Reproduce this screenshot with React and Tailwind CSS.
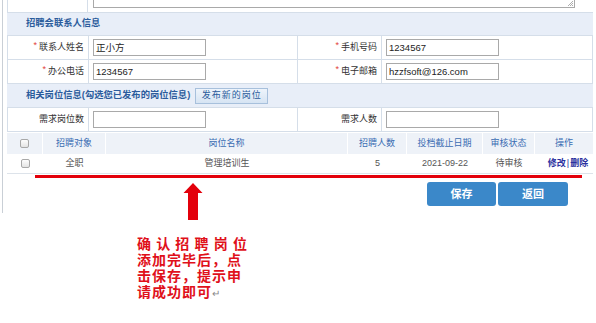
import React from 'react';

const font = { fontFamily: '"Liberation Sans", "Noto Sans CJK SC", sans-serif' };

function Label({ text }) {
  return (
    <div className="flex items-center justify-end pr-[4px] text-[9px] text-[#333] border-l border-[#d5dee9]">
      <span className="text-[#e2403a] text-[9px] mr-[2px] -mt-[3px]">*</span>
      {text}
    </div>
  );
}

function PlainLabel({ text }) {
  return (
    <div className="flex items-center justify-end pr-[4px] text-[9px] text-[#333] border-l border-[#d5dee9]">
      {text}
    </div>
  );
}

function Field({ value }) {
  return (
    <div className="flex items-center pl-[4px] border-l border-[#d5dee9]">
      <div className="w-[113px] h-[17px] border border-[#a9a9a9] px-[2px] flex items-center text-[9.5px] leading-none text-[#222] bg-white">
        {value}
      </div>
    </div>
  );
}

function Checkbox() {
  return (
    <div className="w-[9px] h-[9px] rounded-[2px] border border-[#a8a8a8] bg-gradient-to-b from-[#fdfdfd] to-[#e4e4e4]" />
  );
}

const cols = 'grid grid-cols-[81px_209px_84px_212px]';
const tcols = 'grid grid-cols-[36px_63px_242px_59px_76px_52px_58px]';

export default function App() {
  return (
    <div className="relative w-[596px] h-[323px] bg-white overflow-hidden" style={font}>
      <div className="ml-[2px] h-[213px] border-l border-[#c9cfd6] pl-[4px] w-[591px]">
        {/* textarea row */}
        <div className={`${cols} h-[13px] border-b border-[#d5dee9]`}>
          <div className="border-l border-r border-[#d5dee9]" />
          <div className="col-span-3 pl-[5px]">
            <div className="relative w-[482px] h-[8px] border-x border-b border-[#a9a9a9]">
              <svg className="absolute right-[1px] bottom-[1px]" width="6" height="6" viewBox="0 0 6 6">
                <path d="M1 6 L6 1 M3 6 L6 3 M5 6 L6 5" stroke="#999" strokeWidth="0.8" />
              </svg>
            </div>
          </div>
        </div>

        <div className="h-[23px] bg-[#e8eef8] border-b border-[#d5dee9] flex items-center pl-[19px] text-[9.3px] font-bold text-[#2b5c9c]">
          招聘会联系人信息
        </div>

        <div className={`${cols} h-[24px] border-b border-[#d5dee9] border-r`}>
          <Label text="联系人姓名" />
          <Field value="正小方" />
          <Label text="手机号码" />
          <Field value="1234567" />
        </div>
        <div className={`${cols} h-[24px] border-b border-[#d5dee9] border-r`}>
          <Label text="办公电话" />
          <Field value="1234567" />
          <Label text="电子邮箱" />
          <Field value="hzzfsoft@126.com" />
        </div>

        <div className="h-[24px] bg-[#e8eef8] border-b border-[#d5dee9] flex items-center pl-[19px] text-[9.3px] font-bold text-[#2b5c9c]">
          相关岗位信息(勾选您已发布的岗位信息)
          <div className="ml-[5px] w-[73px] h-[16px] border border-[#a7c0dc] bg-gradient-to-b from-[#eef4fb] to-[#d6e4f3] flex items-center justify-center font-normal text-[9px] tracking-[1px] text-[#2b5c9c]">
            发布新的岗位
          </div>
        </div>

        <div className={`${cols} h-[24px] border-b border-[#d5dee9] border-r`}>
          <PlainLabel text="需求岗位数" />
          <Field value="" />
          <PlainLabel text="需求人数" />
          <Field value="" />
        </div>

        {/* table */}
        <div className={`${tcols} mt-[1px] h-[21px] bg-[#eef2f8] text-[9px] text-[#3b6db3]`}>
          <div className="flex items-center justify-center border-r border-white"><Checkbox /></div>
          <div className="flex items-center justify-center border-r border-white">招聘对象</div>
          <div className="flex items-center justify-center border-r border-white">岗位名称</div>
          <div className="flex items-center justify-center border-r border-white">招聘人数</div>
          <div className="flex items-center justify-center border-r border-white">投档截止日期</div>
          <div className="flex items-center justify-center border-r border-white">审核状态</div>
          <div className="flex items-center justify-center">操作</div>
        </div>
        <div className={`${tcols} h-[20px] border-b border-[#dde3ea] text-[9px] text-[#555]`}>
          <div className="flex items-center justify-center"><Checkbox /></div>
          <div className="flex items-center justify-center">全职</div>
          <div className="flex items-center justify-center">管理培训生</div>
          <div className="flex items-center justify-center">5</div>
          <div className="flex items-center justify-center">2021-09-22</div>
          <div className="flex items-center justify-center">待审核</div>
          <div className="flex items-center justify-center pl-[8px] text-[#2a2f9e] font-bold">
            修改<span className="font-normal mx-[1px]">|</span>删除
          </div>
        </div>

        <div className="flex justify-end gap-[2px] mt-[8px] pr-[25px]">
          <div className="w-[69px] h-[24px] rounded-[3px] bg-[#3b88c9] flex items-center justify-center text-white text-[11px] font-bold">
            保存
          </div>
          <div className="w-[70px] h-[24px] rounded-[3px] bg-[#3b88c9] flex items-center justify-center text-white text-[11px] font-bold">
            返回
          </div>
        </div>
      </div>

      {/* annotation overlay */}
      <div className="absolute left-[35px] top-[175px] w-[547px] h-[3px] bg-[#e3000b]" />
      <svg className="absolute left-[183px] top-[183px]" width="20" height="38" viewBox="0 0 20 38">
        <polygon points="10,0 19.5,10 15,10 15,37 5,37 5,10 0.5,10" fill="#e3000b" />
      </svg>
      <div className="absolute left-[137px] top-[235px] text-[14px] leading-[16px] tracking-[1px] font-semibold text-[#e0101a]" style={{ fontFamily: '"Noto Sans CJK SC", sans-serif' }}>
        <div>确 认 招 聘 岗 位</div>
        <div>添加完毕后，点</div>
        <div>击保存，提示申</div>
        <div>
          请成功即可<span className="text-[#888] text-[10px] font-normal">↵</span>
        </div>
      </div>
    </div>
  );
}
